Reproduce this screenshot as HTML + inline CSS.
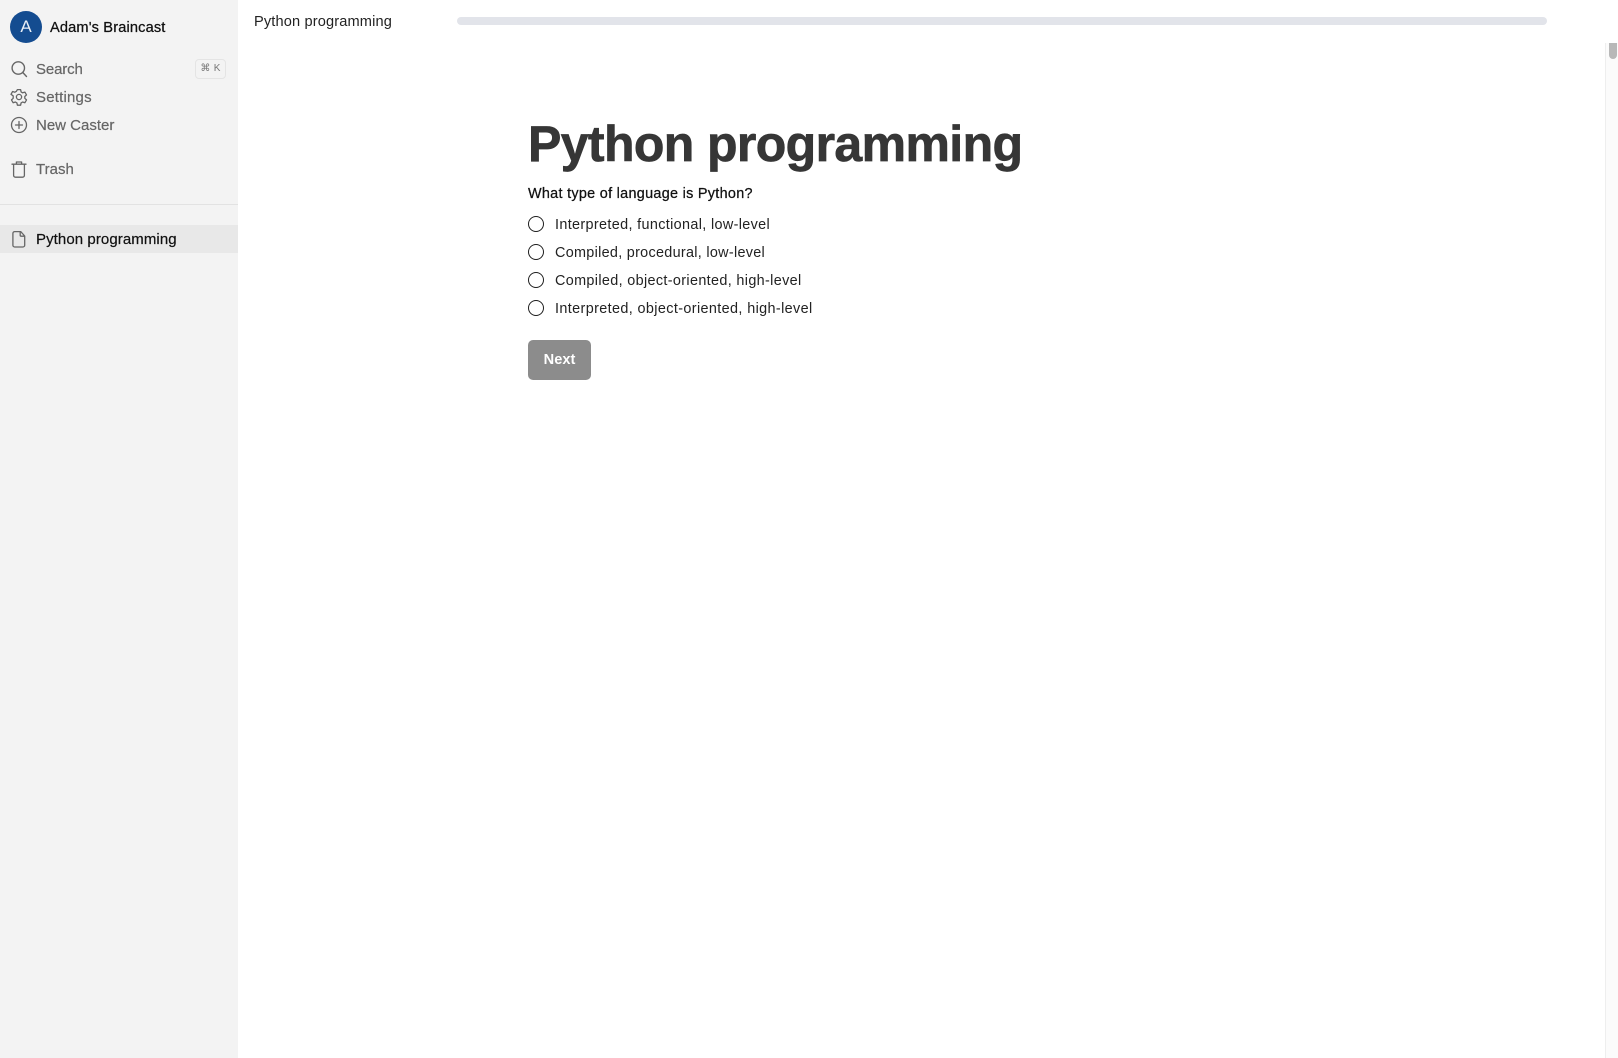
<!DOCTYPE html>
<html><head><meta charset="utf-8"><style>
html,body{margin:0;padding:0;width:1618px;height:1058px;overflow:hidden;background:#fff;font-family:"Liberation Sans",sans-serif}
.a{position:absolute;white-space:nowrap;line-height:20px;height:20px}
svg{position:absolute;fill:none}
.n{color:#666;font-size:15px;left:36px;letter-spacing:.2px;-webkit-text-stroke:.2px #666}
.o{color:#222;font-size:14.4px;left:555px;letter-spacing:.35px}
.r{position:absolute;left:528px;width:14px;height:14px;border:1.4px solid #1f1f1f;border-radius:50%;background:#fff}
</style></head><body>
<div style="position:absolute;left:0;top:0;width:238px;height:1058px;background:#f3f3f3"></div>
<div style="position:absolute;left:0;top:204px;width:238px;height:1px;background:#e2e2e2"></div>
<div style="position:absolute;left:0;top:225px;width:238px;height:28px;background:#e8e8e8"></div>

<div style="position:absolute;left:10px;top:11px;width:32px;height:32px;border-radius:50%;background:#144c90;color:#e8eef6;font-size:17px;line-height:32px;text-align:center">A</div>
<div class="a" style="left:50px;top:18px;font-size:14.6px;color:#111;letter-spacing:.15px;-webkit-text-stroke:.25px #111">Adam's Braincast</div>

<svg style="left:10px;top:60px" width="18" height="18" viewBox="0 0 18 18" stroke="#666" stroke-width="1.4" stroke-linecap="round"><circle cx="8.3" cy="8" r="6.2"/><path d="M12.8 12.5L16.5 16.5"/></svg>
<div class="a n" style="top:60px;letter-spacing:-.13px">Search</div>
<div style="position:absolute;left:195px;top:59px;width:29px;height:18px;border:1px solid #e4e4e4;border-radius:4px;color:#777;font-size:10px;line-height:18px;text-align:center;font-family:'Liberation Sans','DejaVu Sans',sans-serif;letter-spacing:.3px">⌘ K</div>

<svg style="left:10px;top:88px" width="18" height="18" viewBox="0 0 18 18" stroke="#666" stroke-width="1.3" stroke-linejoin="round"><path d="M7.4 1.6h3.2l.5 2.3 1.5.9 2.3-.7 1.6 2.8-1.7 1.6v1.8l1.7 1.6-1.6 2.8-2.3-.7-1.5.9-.5 2.3H7.4l-.5-2.3-1.5-.9-2.3.7-1.6-2.8 1.7-1.6V7.9L1 6.3l1.6-2.8 2.3.7 1.5-.9z"/><circle cx="9" cy="9" r="2.6"/></svg>
<div class="a n" style="top:88px">Settings</div>

<svg style="left:10px;top:116px" width="18" height="18" viewBox="0 0 18 18" stroke="#666" stroke-width="1.3" stroke-linecap="round"><circle cx="9" cy="9" r="7.5"/><path d="M9 5.5v7M5.5 9h7"/></svg>
<div class="a n" style="top:116px;letter-spacing:0">New Caster</div>

<svg style="left:10px;top:160px" width="18" height="18" viewBox="0 0 18 18" stroke="#666" stroke-width="1.3" stroke-linejoin="round" stroke-linecap="round"><path d="M2 4.2h14M6.4 4V2h5.2v2M3.6 4.4v11a1.8 1.8 0 0 0 1.8 1.8h7.2a1.8 1.8 0 0 0 1.8-1.8v-11"/></svg>
<div class="a n" style="top:160px;letter-spacing:0">Trash</div>

<svg style="left:10px;top:230px" width="18" height="18" viewBox="0 0 18 18" stroke="#666" stroke-width="1.3" stroke-linejoin="round"><path d="M4.7 1.6h6l4 4.4v9.2a1.8 1.8 0 0 1-1.8 1.8H4.7a1.8 1.8 0 0 1-1.8-1.8V3.4a1.8 1.8 0 0 1 1.8-1.8z"/><path d="M10.2 1.8v3.4a1 1 0 0 0 1 1h3.4"/></svg>
<div class="a n" style="top:230px;color:#111;letter-spacing:.08px;-webkit-text-stroke:.2px #111">Python programming</div>

<div class="a" style="left:254px;top:12px;font-size:14.6px;color:#222;letter-spacing:.14px">Python programming</div>
<div style="position:absolute;left:457px;top:17px;width:1090px;height:8px;border-radius:4px;background:#e2e4ea"></div>

<div class="a" style="left:528px;top:112px;height:64px;line-height:64px;font-size:50px;font-weight:bold;color:#363636;letter-spacing:-.62px;-webkit-text-stroke:.7px #363636">Python programming</div>
<div class="a" style="left:528px;top:184px;font-size:14.4px;color:#111;letter-spacing:.3px;-webkit-text-stroke:.25px #111">What type of language is Python?</div>

<div class="r" style="top:216px"></div><div class="a o" style="top:215px">Interpreted, functional, low-level</div>
<div class="r" style="top:244px"></div><div class="a o" style="top:243px;letter-spacing:.3px">Compiled, procedural, low-level</div>
<div class="r" style="top:272px"></div><div class="a o" style="top:271px">Compiled, object-oriented, high-level</div>
<div class="r" style="top:300px"></div><div class="a o" style="top:299px;letter-spacing:.38px">Interpreted, object-oriented, high-level</div>

<div style="position:absolute;left:528px;top:340px;width:63px;height:40px;border-radius:5px;background:#8c8c8c;color:#fff;font-size:14.6px;font-weight:bold;line-height:41px;text-align:center">Next</div>

<div style="position:absolute;left:1605px;top:43px;width:13px;height:1015px;background:#fbfbfb;border-left:1px solid #eeeeee;box-sizing:border-box"></div>
<div style="position:absolute;left:1609px;top:43px;width:8px;height:16px;background:#b8b8b8;border-radius:0 0 4px 4px"></div>
</body></html>
